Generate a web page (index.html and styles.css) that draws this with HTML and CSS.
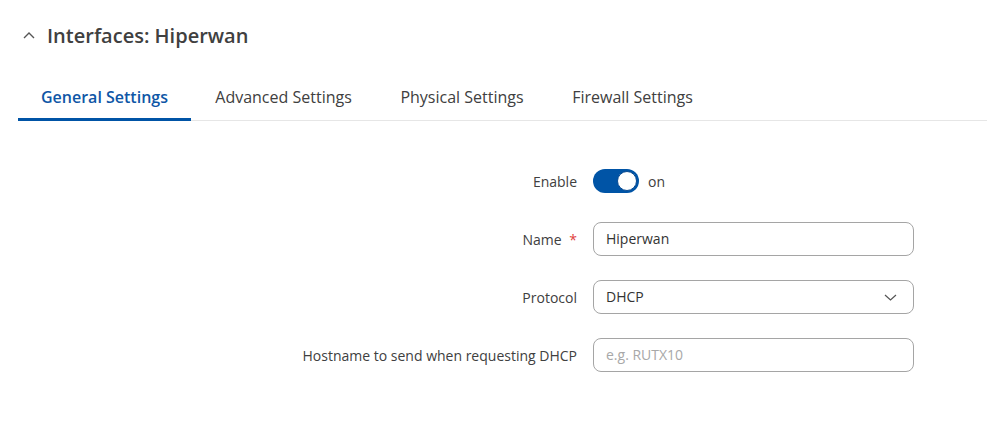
FILE: index.html
```html
<!DOCTYPE html>
<html>
<head>
<meta charset="utf-8">
<link rel="stylesheet" href="styles.css">
</head>
<body>
<div class="page">
  <div class="header">
    <svg class="chev" width="12" height="8" viewBox="0 0 12 8"><path d="M1 7 L6 2 L11 7" fill="none" stroke="#555" stroke-width="1.4"/></svg>
    <h1 class="title">Interfaces: Hiperwan</h1>
  </div>
  <div class="tabs">
    <div class="tab active">General Settings</div>
    <div class="tab">Advanced Settings</div>
    <div class="tab">Physical Settings</div>
    <div class="tab">Firewall Settings</div>
  </div>
  <div class="form">
    <div class="row">
      <div class="label">Enable</div>
      <div class="control toggle-wrap">
        <span class="toggle"><span class="knob"></span></span>
        <span class="on">on</span>
      </div>
    </div>
    <div class="row">
      <div class="label">Name <span class="req">*</span></div>
      <div class="control"><div class="input">Hiperwan</div></div>
    </div>
    <div class="row">
      <div class="label">Protocol</div>
      <div class="control"><div class="input select">DHCP<svg class="arrow" width="13" height="7" viewBox="0 0 13 7"><path d="M1 1 L6.5 6 L12 1" fill="none" stroke="#555" stroke-width="1.2"/></svg></div></div>
    </div>
    <div class="row">
      <div class="label">Hostname to send when requesting DHCP</div>
      <div class="control"><div class="input placeholder">e.g. RUTX10</div></div>
    </div>
  </div>
</div>
</body>
</html>
```

FILE: styles.css
```css
* { box-sizing: border-box; }
html, body { margin: 0; padding: 0; background: #fff; }
body { font-family: "Open Sans", "Noto Sans", sans-serif; color: #404040; }
.page { padding: 0 0 0 18px; }
.header { display: flex; align-items: center; height: 72px; padding-left: 5px; padding-top: 0; }
.chev { margin-right: 12px; margin-top: -2px; }
.title { font-size: 20px; font-weight: 600; margin: 0; color: #404040; line-height: 1; }
.tabs { display: flex; border-bottom: 1px solid #e6e6e6; height: 49px; }
.tab { padding: 0 24.3px 0 24.3px; font-size: 16px; color: #404040; line-height: 50px; height: 48px; }
.tab.active { padding: 0 23px 0 23px; color: #0e56a6; font-weight: 600; border-bottom: 3px solid #0054a6; margin-bottom: -1px; height: 49px; }
.form { padding-top: 43px; width: 896px; display: flex; flex-direction: column; gap: 24px; }
.row { display: flex; align-items: center; height: 34px; }
.label { width: 575px; flex: none; text-align: right; padding-right: 16px; font-size: 14px; color: #404040; }
.req { color: #e0413a; margin-left: 4px; }
.control { flex: 1; }
.toggle-wrap { display: flex; align-items: center; }
.toggle { width: 46px; height: 24px; border-radius: 12px; background: #0054a6; position: relative; display: inline-block; }
.knob { position: absolute; right: 2px; top: 2px; width: 20px; height: 20px; border-radius: 50%; background: #fff; border: 1px solid #0a4a90; }
.on { margin-left: 9px; font-size: 14px; color: #404040; }
.input { height: 34px; border: 1px solid #a5a5a5; border-radius: 8px; padding: 0 12px; font-size: 14px; line-height: 32px; color: #333; position: relative; }
.placeholder { color: #a8a8a8; }
.select { display: flex; justify-content: space-between; align-items: center; padding-right: 16px; }
```
